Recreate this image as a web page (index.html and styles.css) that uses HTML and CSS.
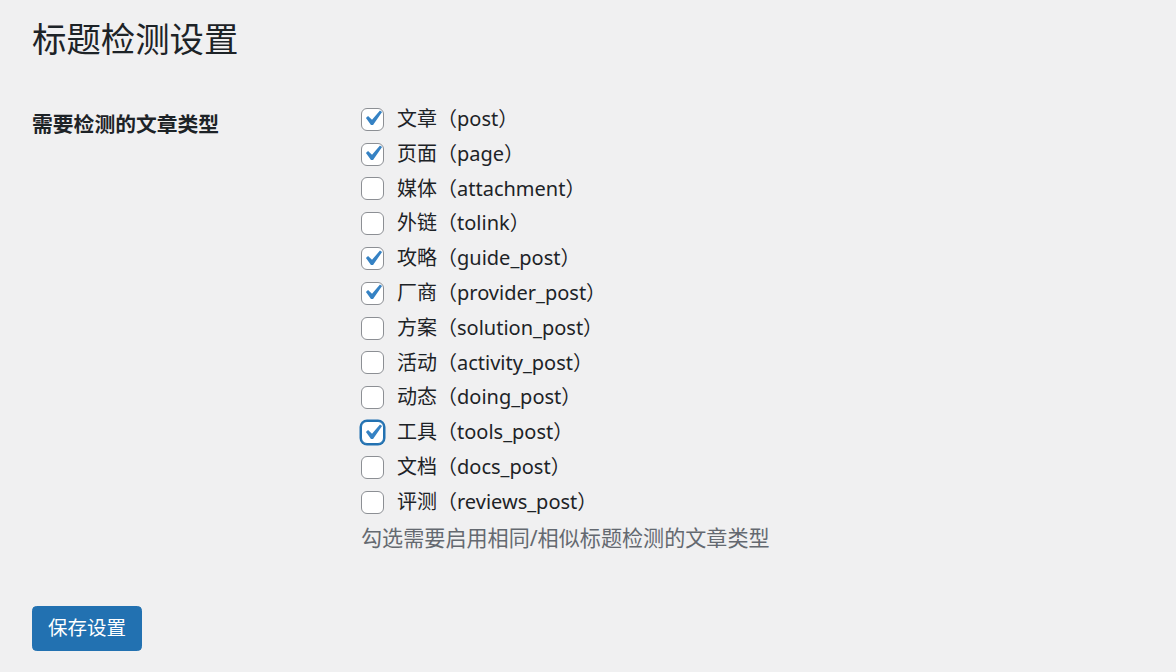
FILE: index.html
```html
<!DOCTYPE html>
<html lang="zh-CN">
<head>
<meta charset="utf-8">
<title>标题检测设置</title>
<link rel="stylesheet" href="styles.css">
</head>
<body>
<div class="wrap">
  <h1 class="page-title">标题检测设置</h1>
  <form class="settings">
    <div class="form-row">
      <div class="row-label">需要检测的文章类型</div>
      <div class="row-field">
        <label class="opt"><span class="cb checked"><svg viewBox="0 0 20 20"><path d="M14.83 4.89l1.34.94-5.81 8.38H9.02L5.78 9.67l1.34-1.25 2.57 2.4z"/></svg></span>文章（post）</label>
        <label class="opt"><span class="cb checked"><svg viewBox="0 0 20 20"><path d="M14.83 4.89l1.34.94-5.81 8.38H9.02L5.78 9.67l1.34-1.25 2.57 2.4z"/></svg></span>页面（page）</label>
        <label class="opt"><span class="cb"></span>媒体（attachment）</label>
        <label class="opt"><span class="cb"></span>外链（tolink）</label>
        <label class="opt"><span class="cb checked"><svg viewBox="0 0 20 20"><path d="M14.83 4.89l1.34.94-5.81 8.38H9.02L5.78 9.67l1.34-1.25 2.57 2.4z"/></svg></span>攻略（guide_post）</label>
        <label class="opt"><span class="cb checked"><svg viewBox="0 0 20 20"><path d="M14.83 4.89l1.34.94-5.81 8.38H9.02L5.78 9.67l1.34-1.25 2.57 2.4z"/></svg></span>厂商（provider_post）</label>
        <label class="opt"><span class="cb"></span>方案（solution_post）</label>
        <label class="opt"><span class="cb"></span>活动（activity_post）</label>
        <label class="opt"><span class="cb"></span>动态（doing_post）</label>
        <label class="opt"><span class="cb checked focus"><svg viewBox="0 0 20 20"><path d="M14.83 4.89l1.34.94-5.81 8.38H9.02L5.78 9.67l1.34-1.25 2.57 2.4z"/></svg></span>工具（tools_post）</label>
        <label class="opt"><span class="cb"></span>文档（docs_post）</label>
        <label class="opt"><span class="cb"></span>评测（reviews_post）</label>
        <p class="description">勾选需要启用相同/相似标题检测的文章类型</p>
      </div>
    </div>
    <div class="submit">
      <button type="button" class="button-primary">保存设置</button>
    </div>
  </form>
</div>
</body>
</html>
```

FILE: styles.css
```css
html, body {
  margin: 0;
  padding: 0;
  background: #f0f0f1;
}
body {
  font-family: "Noto Sans", "Noto Sans CJK SC", sans-serif;
  color: #1d2327;
  font-size: 20px;
  width: 1176px;
  height: 672px;
  overflow: hidden;
}
.wrap {
  padding-left: 32px;
}
.page-title {
  margin: 0;
  padding-top: 16px;
  font-size: 34.4px;
  font-weight: 400;
  line-height: 45px;
  color: #1d2327;
}
.settings {
  margin: 0;
}
.form-row {
  display: flex;
  margin-top: 41px;
}
.row-label {
  width: 330px;
  flex: none;
  font-weight: 700;
  font-size: 20.8px;
  line-height: 26px;
  margin-top: 9px;
}
.row-field {
  display: flex;
  flex-direction: column;
  margin-left: -1px;
}
.opt {
  display: flex;
  align-items: center;
  height: 34.8px;
  line-height: 34.8px;
  white-space: nowrap;
}
.cb {
  box-sizing: border-box;
  width: 23px;
  height: 23px;
  border: 1.5px solid #8c8f94;
  border-radius: 6px;
  background: #fff;
  margin-right: 13px;
  display: flex;
  align-items: center;
  justify-content: center;
  flex: none;
}
.cb svg {
  width: 31px;
  height: 31px;
  fill: #3582c4;
  flex: none;
  margin-left: -1px;
  margin-top: -1px;
}
.cb.focus {
  border-color: #2271b1;
  box-shadow: 0 0 0 1.5px #2271b1;
}
.description {
  margin: 0;
  font-size: 21.1px;
  line-height: 36px;
  color: #646970;
}
.submit {
  margin-top: 50px;
}
.button-primary {
  font-family: inherit;
  font-size: 19.5px;
  color: #fff;
  background: #2271b1;
  border: 1.5px solid #2271b1;
  border-radius: 4.5px;
  width: 110px;
  height: 45px;
  padding: 0;
  line-height: 40px;
  cursor: pointer;
}
```
